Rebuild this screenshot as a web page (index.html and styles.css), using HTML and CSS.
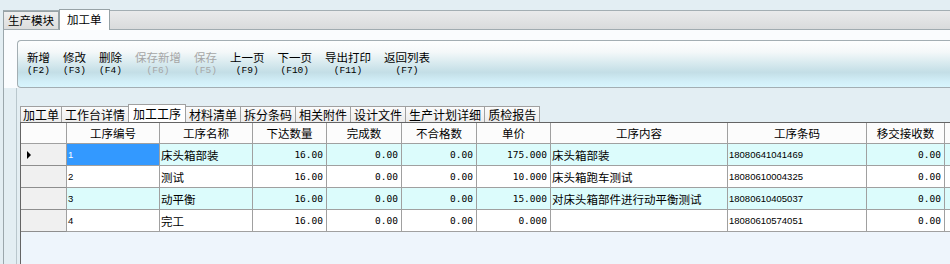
FILE: index.html
```html
<!DOCTYPE html>
<html lang="zh">

<head>
    <meta charset="UTF-8">
    <title>加工单</title>
    <link rel="stylesheet" href="styles.css">
</head>

<body>
    <div class="strip"></div>
    <div class="frame">
        <div class="mtabs">
            <div class="mtab">生产模块</div>
            <div class="mtab on">加工单</div>
        </div>
        <div class="head">
            <div class="toolbar">
                <div class="btn"><span>新增</span><span class="k">(F2)</span></div>
                <div class="btn"><span>修改</span><span class="k">(F3)</span></div>
                <div class="btn"><span>删除</span><span class="k">(F4)</span></div>
                <div class="btn off"><span>保存新增</span><span class="k">(F6)</span></div>
                <div class="btn off"><span>保存</span><span class="k">(F5)</span></div>
                <div class="btn"><span>上一页</span><span class="k">(F9)</span></div>
                <div class="btn"><span>下一页</span><span class="k">(F10)</span></div>
                <div class="btn"><span>导出打印</span><span class="k">(F11)</span></div>
                <div class="btn"><span>返回列表</span><span class="k">(F7)</span></div>
            </div>
        </div>
        <div class="body">
            <div class="inner">
                <div class="itabs">
                    <div class="itab">加工单</div>
                    <div class="itab">工作台详情</div>
                    <div class="itab on">加工工序</div>
                    <div class="itab">材料清单</div>
                    <div class="itab">拆分条码</div>
                    <div class="itab">相关附件</div>
                    <div class="itab">设计文件</div>
                    <div class="itab">生产计划详细</div>
                    <div class="itab">质检报告</div>
                </div>
                <div class="grid">
                    <div class="row hd">
                        <div class="c"></div>
                        <div class="c">工序编号</div>
                        <div class="c">工序名称</div>
                        <div class="c">下达数量</div>
                        <div class="c">完成数</div>
                        <div class="c">不合格数</div>
                        <div class="c">单价</div>
                        <div class="c">工序内容</div>
                        <div class="c">工序条码</div>
                        <div class="c">移交接收数</div>
                        <div class="c"></div>
                    </div>
                    <div class="row alt">
                        <div class="c rh"><i class="arrow"></i></div>
                        <div class="c code sel">1</div>
                        <div class="c">床头箱部装</div>
                        <div class="c n">16.00</div>
                        <div class="c n">0.00</div>
                        <div class="c n">0.00</div>
                        <div class="c n">175.000</div>
                        <div class="c">床头箱部装</div>
                        <div class="c code">18080641041469</div>
                        <div class="c n">0.00</div>
                        <div class="c"></div>
                    </div>
                    <div class="row">
                        <div class="c rh"></div>
                        <div class="c code">2</div>
                        <div class="c">测试</div>
                        <div class="c n">16.00</div>
                        <div class="c n">0.00</div>
                        <div class="c n">0.00</div>
                        <div class="c n">10.000</div>
                        <div class="c">床头箱跑车测试</div>
                        <div class="c code">18080610004325</div>
                        <div class="c n">0.00</div>
                        <div class="c"></div>
                    </div>
                    <div class="row alt">
                        <div class="c rh"></div>
                        <div class="c code">3</div>
                        <div class="c">动平衡</div>
                        <div class="c n">16.00</div>
                        <div class="c n">0.00</div>
                        <div class="c n">0.00</div>
                        <div class="c n">15.000</div>
                        <div class="c">对床头箱部件进行动平衡测试</div>
                        <div class="c code">18080610405037</div>
                        <div class="c n">0.00</div>
                        <div class="c"></div>
                    </div>
                    <div class="row">
                        <div class="c rh"></div>
                        <div class="c code">4</div>
                        <div class="c">完工</div>
                        <div class="c n">16.00</div>
                        <div class="c n">0.00</div>
                        <div class="c n">0.00</div>
                        <div class="c n">0.000</div>
                        <div class="c"></div>
                        <div class="c code">18080610574051</div>
                        <div class="c n">0.00</div>
                        <div class="c"></div>
                    </div>
                </div>
            </div>
        </div>
    </div>
</body>

</html>
```

FILE: styles.css
```css
* {
    margin: 0;
    padding: 0;
    box-sizing: border-box;
}

body {
    width: 950px;
    height: 264px;
    overflow: hidden;
    background-color: #e3eef3;
    font-family: "Noto Sans CJK SC", sans-serif;
    font-size: 11.5px;
    color: #000;
}

.strip {
    height: 10px;
}

.frame {
    margin-left: 3px;
    height: 254px;
    border-left: 1px solid #9ba7ac;
    display: flex;
    flex-direction: column;
}

/* outer tabs */
.mtabs {
    height: 20px;
    flex: none;
    border-top: 1px solid #a3aeb3;
    border-bottom: 1px solid #a0abb0;
    background: linear-gradient(#e9eaeb, #d9dbdc);
    display: flex;
    align-items: flex-end;
}

.mtab {
    height: 18px;
    padding: 0 4px;
    border: 1px solid #97a2a6;
    border-bottom: none;
    line-height: 16px;
    background: linear-gradient(#efefef, #dcdddd);
}

.mtab:first-child {
    margin-left: -1px;
}

.mtab.on {
    height: 21px;
    margin-bottom: -1px;
    margin-left: 0;
    padding: 0 7px;
    line-height: 19px;
    background: #fff;
}

/* toolbar */
.head {
    flex: none;
    background-color: #fafcfe;
    padding: 10px 0 0 13px;
}

.toolbar {
    height: 48px;
    border: 1px solid #a3aeb3;
    border-right: none;
    border-radius: 4px 0 0 4px;
    background: linear-gradient(#fdfefe 0%, #f4f8f9 24%, #d6e9ee 50%, #c3dee6 68%, #d2eff8 88%, #d8f5fd 100%);
    display: flex;
    gap: 13px;
    padding: 10px 0 0 9px;
}

.btn {
    display: flex;
    flex-direction: column;
    align-items: center;
    cursor: pointer;
}

.btn span {
    height: 13px;
    line-height: 13px;
}

.btn .k {
    height: 11px;
    margin-top: 1px;
    font-family: "Liberation Mono", monospace;
    font-size: 9.5px;
    line-height: 11px;
}

.off {
    color: #a6a6a6;
}

/* inner tabs + grid */
.body {
    flex: 1;
    padding-left: 12px;
    min-height: 0;
}

.inner {
    height: 100%;
    border-left: 1px solid #b9c7cd;
    padding: 18px 0 0 3px;
    display: flex;
    flex-direction: column;
}

.itabs {
    height: 16px;
    flex: none;
    display: flex;
    align-items: flex-end;
}

.itab {
    height: 16px;
    padding: 0 3px;
    border: 1px solid #a0a0a0;
    border-bottom: none;
    border-left: none;
    line-height: 15px;
    font-size: 12px;
    background: linear-gradient(#fbfbfb, #ececec);
}

.itab:first-child {
    border-left: 1px solid #a0a0a0;
    padding: 0 2px;
}

.itab.on {
    height: 19px;
    margin-bottom: -1px;
    margin-left: -1px;
    padding: 0 4px;
    border-left: 1px solid #a0a0a0;
    line-height: 18px;
    background: #fff;
}

.grid {
    flex: 1;
    width: 930px;
    overflow: hidden;
    border-top: 1px solid #646464;
    border-left: 1px solid #646464;
    background-color: #eef5fc;
}

.row {
    display: grid;
    grid-template-columns: 46px 93px 93px 74px 75px 75px 74px 177px 139px 78px 60px;
    height: 22px;
}

.hd {
    height: 21px;
}

.c {
    border-right: 1px solid #a0a0a0;
    border-bottom: 1px solid #a0a0a0;
    background-color: #fff;
    padding: 0 1px;
    white-space: nowrap;
    overflow: hidden;
    display: flex;
    align-items: center;
}

.hd .c {
    justify-content: center;
    background-color: #fcfcfc;
}

.alt .c {
    background-color: #dcfcfc;
}

.n {
    justify-content: flex-end;
    padding-right: 3px;
    font-family: "DejaVu Sans Mono", monospace;
    font-size: 9.5px;
}

.code {
    font-family: "Liberation Sans", sans-serif;
    font-size: 9.5px;
}

.row .rh {
    background-color: #f0f0f0;
    border-bottom-color: #8e8e8e;
}

.alt .sel {
    background-color: #3399ff;
    color: #fff;
}

.arrow {
    width: 0;
    height: 0;
    margin-left: 5px;
    border-left: 4px solid #000;
    border-top: 4px solid transparent;
    border-bottom: 4px solid transparent;
}
```
